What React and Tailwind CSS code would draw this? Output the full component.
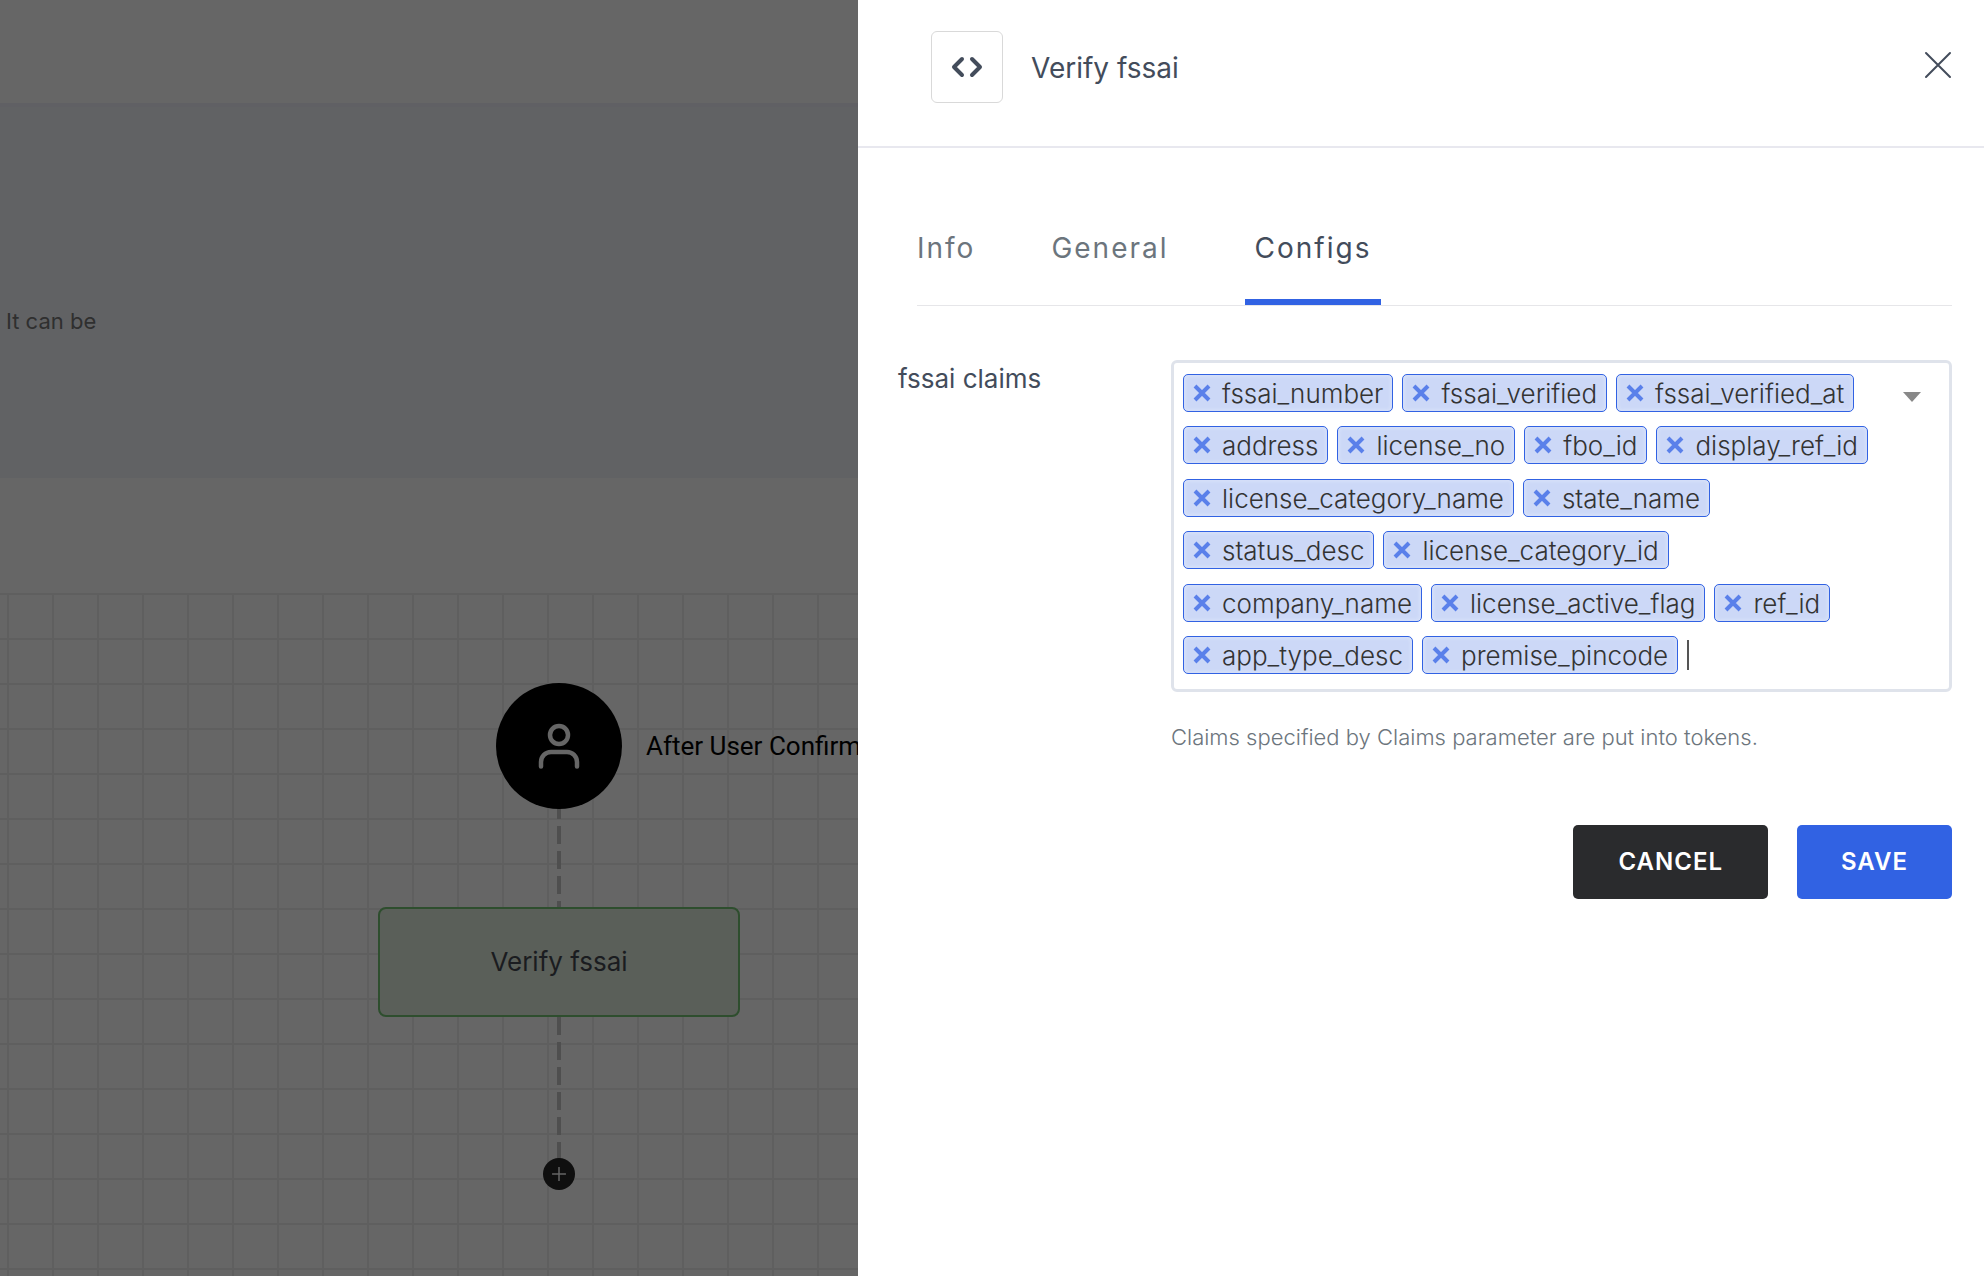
import React, { useState } from 'react';

const TABS = ['Info', 'General', 'Configs'];

const INITIAL_CLAIMS = [
    'fssai_number',
    'fssai_verified',
    'fssai_verified_at',
    'address',
    'license_no',
    'fbo_id',
    'display_ref_id',
    'license_category_name',
    'state_name',
    'status_desc',
    'license_category_id',
    'company_name',
    'license_active_flag',
    'ref_id',
    'app_type_desc',
    'premise_pincode'
];

function Connector({ className }) {
    return (
        <div className={`absolute left-[557px] w-1 bg-[repeating-linear-gradient(to_bottom,#4f4f4f_0_18px,transparent_18px_25px)] ${className}`} />
    );
}

function WorkflowCanvas() {
    return (
        <section className="relative flex-1 bg-[linear-gradient(to_right,#5f5f5f_2px,transparent_2px),linear-gradient(to_bottom,#5f5f5f_2px,transparent_2px)] bg-[length:45px_45px] bg-[position:7px_0px]">
            <Connector className="top-[208px] h-[106px]" />
            <Connector className="top-[424px] h-[142px]" />

            <div className="absolute left-[496px] top-[90px] flex items-center gap-6 whitespace-nowrap">
                <div className="flex size-[126px] items-center justify-center rounded-full bg-black">
                    <svg width="42" height="46" viewBox="0 0 42 46" fill="none" stroke="#666666" strokeWidth="4.5" strokeLinecap="round">
                        <circle cx="21" cy="12" r="9" />
                        <path d="M3 43.5v-4.5a10 10 0 0 1 10-10h16a10 10 0 0 1 10 10v4.5" />
                    </svg>
                </div>
                <span className="font-['Roboto',sans-serif] text-[26px] text-black">After User Confirmation</span>
            </div>

            <button type="button" className="absolute left-[378px] top-[314px] h-[110px] w-[362px] rounded-lg border-2 border-[#2e4e2e] bg-[#5a5f59] pb-0.5 text-[26px] text-[#1a1c20]">
                Verify fssai
            </button>

            <button type="button" aria-label="Add step" className="absolute left-[543px] top-[565px] flex size-8 items-center justify-center rounded-full bg-[#0f0f0f]">
                <svg width="14" height="14" viewBox="0 0 14 14" stroke="#666666" strokeWidth="1.5" strokeLinecap="round">
                    <path d="M7 0.5v13M0.5 7h13" />
                </svg>
            </button>
        </section>
    );
}

function ClaimTag({ name, onRemove }) {
    return (
        <li className="flex h-[38px] items-center gap-[11px] rounded-[5px] border border-[#3162e3] bg-[#ccd8f7] px-[9px] shadow-[inset_0_0_4px_#e2e9fb]">
            <button type="button" onClick={onRemove} aria-label={`Remove ${name}`}>
                <svg width="18" height="18" viewBox="0 0 18 18" stroke="#5a80ea" strokeWidth="4">
                    <path d="M2 2l14 14M16 2L2 16" />
                </svg>
            </button>
            <span className="pt-0.5 text-[26px] leading-8 font-light text-[#333333]">{name}</span>
        </li>
    );
}

function ClaimsSelect({ claims, setClaims }) {
    const [query, setQuery] = useState('');

    const handleKeyDown = (e) => {
        if (e.key === 'Enter' && query.trim()) {
            setClaims([...claims, query.trim()]);
            setQuery('');
        }
    };

    return (
        <div className="flex items-start rounded-md border-[3px] border-[#dfe3eb] bg-white pt-[11px] pr-[28px] pb-[15px] pl-[9px]">
            <ul className="flex min-h-[300px] flex-1 flex-wrap content-between items-center gap-x-[9px]">
                {claims.map((claim) => (
                    <ClaimTag
                        key={claim}
                        name={claim}
                        onRemove={() => setClaims(claims.filter(c => c !== claim))}
                    />
                ))}
                <li className="flex">
                    <input
                        id="claims"
                        type="text"
                        value={query}
                        onChange={(e) => setQuery(e.target.value)}
                        onKeyDown={handleKeyDown}
                        className="h-[30px] w-24 border-l-2 border-[#555555] text-[26px] font-light outline-none"
                    />
                </li>
            </ul>
            <svg className="mt-[18px] shrink-0" width="18" height="10" viewBox="0 0 18 10" fill="#888888">
                <path d="M0 0h18l-9 10z" />
            </svg>
        </div>
    );
}

function ConfigDrawer() {
    const [activeTab, setActiveTab] = useState('Configs');
    const [claims, setClaims] = useState(INITIAL_CLAIMS);

    return (
        <aside className="absolute inset-y-0 right-0 w-[1126px] max-w-full bg-white text-[#434c5b]">
            <header className="flex h-[148px] items-start border-b-2 border-[#e8e8ef] pt-[31px] pr-8 pl-[73px]">
                <div className="flex size-[72px] items-center justify-center rounded-md border border-[#d9d9d9]">
                    <svg width="32" height="22" viewBox="0 0 32 22" fill="none" stroke="#434c5b" strokeWidth="4" strokeLinecap="round" strokeLinejoin="round">
                        <path d="M11 3L3 11l8 8M21 3l8 8-8 8" />
                    </svg>
                </div>
                <h2 className="ml-7 flex-1 text-[28px] leading-[74px]">Verify fssai</h2>
                <button type="button" aria-label="Close" className="mt-5">
                    <svg width="28" height="28" viewBox="0 0 28 28" stroke="#434c5b" strokeWidth="2" strokeLinecap="round">
                        <path d="M2 2l24 24M26 2L2 26" />
                    </svg>
                </button>
            </header>

            <div className="pt-[73px] pr-8 pl-10">
                <nav className="ml-[19px] flex border-b border-[#e6e6e9]">
                    {TABS.map((tab) => (
                        <button
                            key={tab}
                            type="button"
                            onClick={() => setActiveTab(tab)}
                            className={tab === activeTab
                                ? 'h-[84px] border-b-6 border-[#3162e3] px-[10px] pb-6 text-[28px] tracking-[2px]'
                                : 'mr-[76px] h-[84px] border-b-6 border-transparent pb-6 text-[28px] tracking-[2px] text-[#6c757d]'}
                        >
                            {tab}
                        </button>
                    ))}
                </nav>

                <form onSubmit={(e) => e.preventDefault()}>
                    <div className="flex pt-[54px]">
                        <label htmlFor="claims" className="w-[273px] shrink-0 text-[26px] leading-[38px]">fssai claims</label>
                        <div className="flex-1">
                            <ClaimsSelect claims={claims} setClaims={setClaims} />
                            <p className="mt-[27px] text-[22px] leading-9 font-light text-[#6c757d]">
                                Claims specified by Claims parameter are put into tokens.
                            </p>
                        </div>
                    </div>

                    <div className="mt-[70px] flex justify-end gap-[29px]">
                        <button type="button" className="h-[74px] rounded-[5px] bg-[#2a2b2d] px-[45px] text-2xl font-semibold tracking-[1px] text-white">
                            CANCEL
                        </button>
                        <button type="submit" className="h-[74px] rounded-[5px] bg-[#3162e3] px-11 text-2xl font-semibold tracking-[1px] text-white">
                            SAVE
                        </button>
                    </div>
                </form>
            </div>
        </aside>
    );
}

function App() {
    return (
        <div className="relative flex min-h-screen flex-col overflow-hidden bg-[#666666] font-['Inter',sans-serif]">
            <div className="h-[107px] border-b-4 border-[#606064]" />
            <div className="h-[371px] bg-[#616264] px-1.5 pt-[196px]">
                <p className="text-[22px] leading-9 text-[#2f2f2f]">It can be</p>
            </div>
            <div className="h-[115px]" />
            <WorkflowCanvas />
            <ConfigDrawer />
        </div>
    );
}

export default App;
